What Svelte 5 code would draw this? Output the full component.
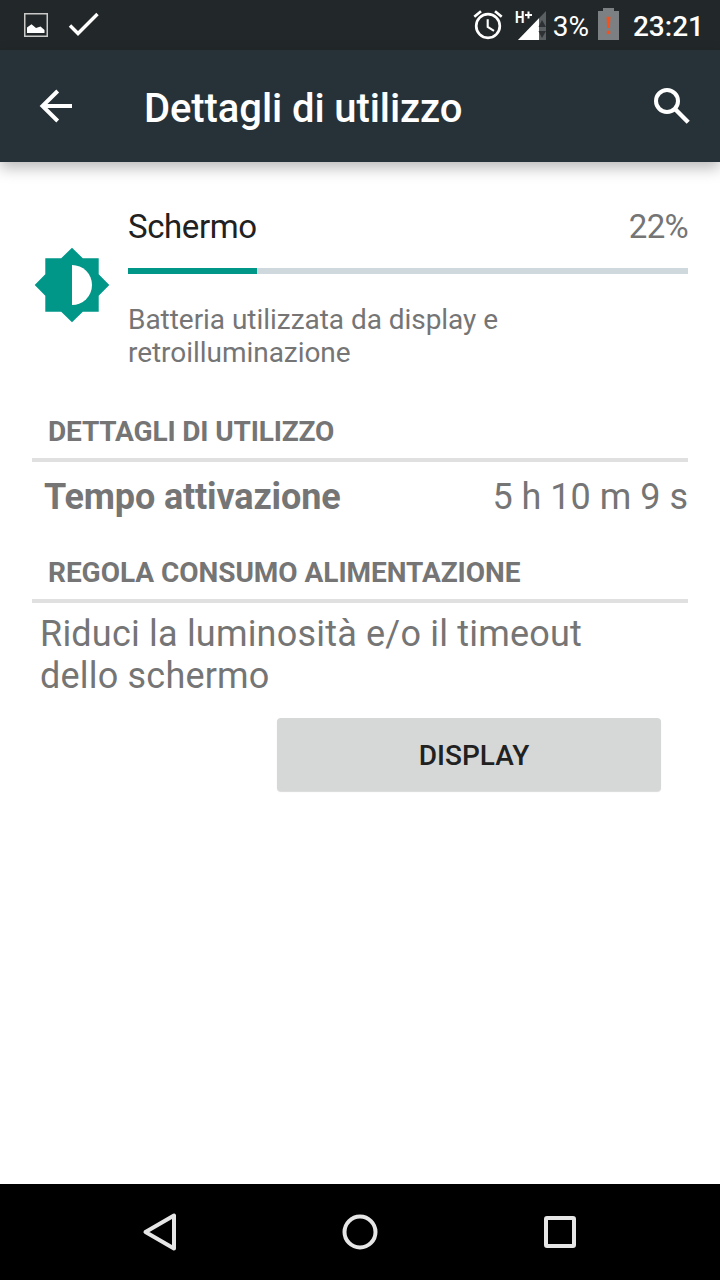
<script lang="ts">
  const title = "Dettagli di utilizzo"
  const clock = "23:21"
  const batteryLevel = 3

  const usage = {
    name: "Schermo",
    percent: 22,
    fill: 23,
    description: "Batteria utilizzata da display e retroilluminazione",
  }

  const details = [{ label: "Tempo attivazione", value: "5 h 10 m 9 s" }]
</script>

<div class="screen">
  <div class="status">
    <div class="notifications">
      <svg width="24" height="24" viewBox="0 0 24 24">
        <rect x="0.75" y="0.75" width="22.5" height="22.5" fill="none" stroke="#c9cac8" stroke-width="1.5" />
        <path d="M3 14.5 7.5 11.3 12 15 16.5 13.5 20.5 17V20H3z" fill="#fff" />
      </svg>
      <svg width="32" height="26" viewBox="0 0 32 26">
        <path d="M2 13.5 10 21.5 29.5 2" fill="none" stroke="#fff" stroke-width="3.4" />
      </svg>
    </div>

    <div class="system">
      <svg class="alarm" width="30" height="30" viewBox="0 0 30 30">
        <circle cx="15" cy="16" r="11.8" fill="none" stroke="#fff" stroke-width="2.7" />
        <path d="M14.7 9.2v7.6l6.3 4" fill="none" stroke="#fff" stroke-width="2.1" />
        <path d="M1.3 6.7 8 1.3M28.7 6.7 22 1.3" stroke="#fff" stroke-width="2.7" />
      </svg>
      <svg class="signal" width="32" height="32" viewBox="0 0 32 32">
        <path d="M3 31 31 2V31z" fill="#5a5f62" />
        <path d="M3 31 24 9.3V31z" fill="#fff" />
        <path d="M23.5 18 27 11 31 18zM23.5 22H31L27 29z" fill="#2d3133" />
        <text x="0" y="14" class="network" textLength="9.5" lengthAdjust="spacingAndGlyphs">H</text>
        <path d="M10 6h7M13.5 2.5v7" stroke="#fff" stroke-width="2" />
      </svg>
      <span class="level">{batteryLevel}%</span>
      <svg class="battery" width="22" height="32" viewBox="0 0 22 32">
        <path d="M0 3H5V0H16V3H21V32H0z" fill="#7c8082" />
        <path d="M8.6 8.8h3.8l-.5 11.2H9.1zM8.8 22.8h3.4v3.2H8.8z" fill="#f4511e" />
      </svg>
      <span class="clock">{clock}</span>
    </div>
  </div>

  <header>
    <svg width="34" height="34" viewBox="0 0 34 34">
      <path d="M33 17H4M18.7 2 3.5 17 18.7 32" fill="none" stroke="#fff" stroke-width="4" />
    </svg>
    <h1>{title}</h1>
    <svg width="38" height="38" viewBox="0 0 38 38">
      <circle cx="14" cy="14" r="11" fill="none" stroke="#fff" stroke-width="4" />
      <path d="M22.5 22.5 35.2 35.2" stroke="#fff" stroke-width="4.4" />
    </svg>
  </header>

  <main>
    <section class="usage">
      <svg width="76" height="76" viewBox="0 0 76 76">
        <path
          d="M38 .7 48.8 11.3H64.7V27.2L75.3 38 64.7 48.8V64.7H48.8L38 75.3 27.2 64.7H11.3V48.8L.7 38 11.3 27.2V11.3H27.2z"
          fill="#009688"
        />
        <path d="M38 18a20 20 0 0 1 0 40z" fill="#fff" />
      </svg>
      <div class="info">
        <div class="heading">
          <span class="name">{usage.name}</span>
          <span class="percent">{usage.percent}%</span>
        </div>
        <div class="bar">
          <div class="fill" style="width: {usage.fill}%"></div>
        </div>
        <p>{usage.description}</p>
      </div>
    </section>

    <h2>DETTAGLI DI UTILIZZO</h2>
    {#each details as row}
      <div class="row">
        <strong>{row.label}</strong>
        <span>{row.value}</span>
      </div>
    {/each}

    <h2 class="adjust">REGOLA CONSUMO ALIMENTAZIONE</h2>
    <p class="tip">Riduci la luminosità e/o il timeout dello schermo</p>
    <button>DISPLAY</button>
  </main>

  <nav>
    <svg width="40" height="40" viewBox="0 0 40 40">
      <path d="M5.5 20 34 3.5V36.5z" />
    </svg>
    <svg width="40" height="40" viewBox="0 0 40 40">
      <circle cx="20" cy="20" r="15.5" />
    </svg>
    <svg width="40" height="40" viewBox="0 0 40 40">
      <rect x="6" y="6" width="28" height="28" rx="1" />
    </svg>
  </nav>
</div>

<style>
  :global(body) {
    margin: 0;
  }
  .screen {
    display: flex;
    flex-direction: column;
    width: 720px;
    height: 1280px;
    overflow: hidden;
    background: #fff;
    color: #757575;
    font-family: Roboto, sans-serif;
  }
  svg {
    display: block;
    flex: none;
  }
  h1, h2, p {
    margin: 0;
  }

  .status {
    display: flex;
    justify-content: space-between;
    height: 50px;
    box-sizing: border-box;
    padding: 0 16px 0 24px;
    background: #22272a;
    color: #fff;
    font-size: 28px;
    line-height: 50px;
  }
  .notifications {
    display: flex;
    align-items: center;
    gap: 20px;
  }
  .system {
    display: flex;
    align-items: center;
  }
  .level, .clock {
    padding-top: 3px;
  }
  .alarm { margin-right: 12px; }
  .signal { margin-right: 6px; }
  .battery { margin: 0 13px 2px 9px; }
  .network {
    fill: #fff;
    font-size: 16px;
    font-weight: 700;
  }
  .clock {
    font-weight: 500;
  }

  header {
    display: flex;
    align-items: center;
    height: 112px;
    box-sizing: border-box;
    padding: 0 29px 0 39px;
    background: #273238;
    color: #fff;
    box-shadow: 0 6px 14px rgba(0, 0, 0, 0.27);
  }
  h1 {
    flex: 1;
    padding: 6px 0 0 71px;
    font-size: 40px;
    font-weight: 500;
    line-height: 48px;
    letter-spacing: -0.09px;
  }

  main {
    flex: 1;
    padding: 46px 32px 0;
  }
  .usage {
    display: flex;
    gap: 18px;
    padding-left: 2px;
  }
  .usage svg {
    margin-top: 39px;
  }
  .info {
    flex: 1;
  }
  .heading {
    display: flex;
    justify-content: space-between;
    font-size: 33px;
    line-height: 38px;
    letter-spacing: -0.4px;
  }
  .name {
    color: #212121;
  }
  .percent {
    letter-spacing: -0.7px;
  }
  .bar {
    height: 6px;
    margin: 22px 0 29px;
    background: #cfd8dc;
  }
  .fill {
    height: 100%;
    background: #009688;
  }
  .info p {
    font-size: 28px;
    line-height: 33px;
    letter-spacing: -0.04px;
  }
  h2 {
    height: 43px;
    margin-top: 46px;
    padding-left: 16px;
    border-bottom: 4px solid #e0e0e0;
    font-size: 28px;
    font-weight: 700;
    line-height: 33px;
    letter-spacing: -0.15px;
  }
  .adjust {
    margin-top: 38px;
    letter-spacing: -0.04px;
  }
  .row {
    display: flex;
    justify-content: space-between;
    padding: 14px 0 0 12px;
    font-size: 36px;
    line-height: 42px;
  }
  .row strong {
    letter-spacing: -0.15px;
  }
  .tip {
    width: 600px;
    padding: 10px 0 0 8px;
    font-size: 36px;
    line-height: 42px;
    letter-spacing: 0.2px;
  }
  button {
    display: block;
    width: 384px;
    height: 73px;
    margin: 21px 27.5px 0 auto;
    padding: 2px 0 0 11px;
    border: 0;
    border-radius: 4px;
    background: #d6d7d7;
    box-shadow: 0 1px 1px rgba(0, 0, 0, 0.15);
    color: #212121;
    font: 500 28px Roboto, sans-serif;
  }

  nav {
    display: flex;
    justify-content: center;
    align-items: center;
    gap: 160px;
    height: 96px;
    background: #000;
  }
  nav svg {
    fill: none;
    stroke: #e6e6e6;
    stroke-width: 4;
    stroke-linejoin: round;
  }
</style>
